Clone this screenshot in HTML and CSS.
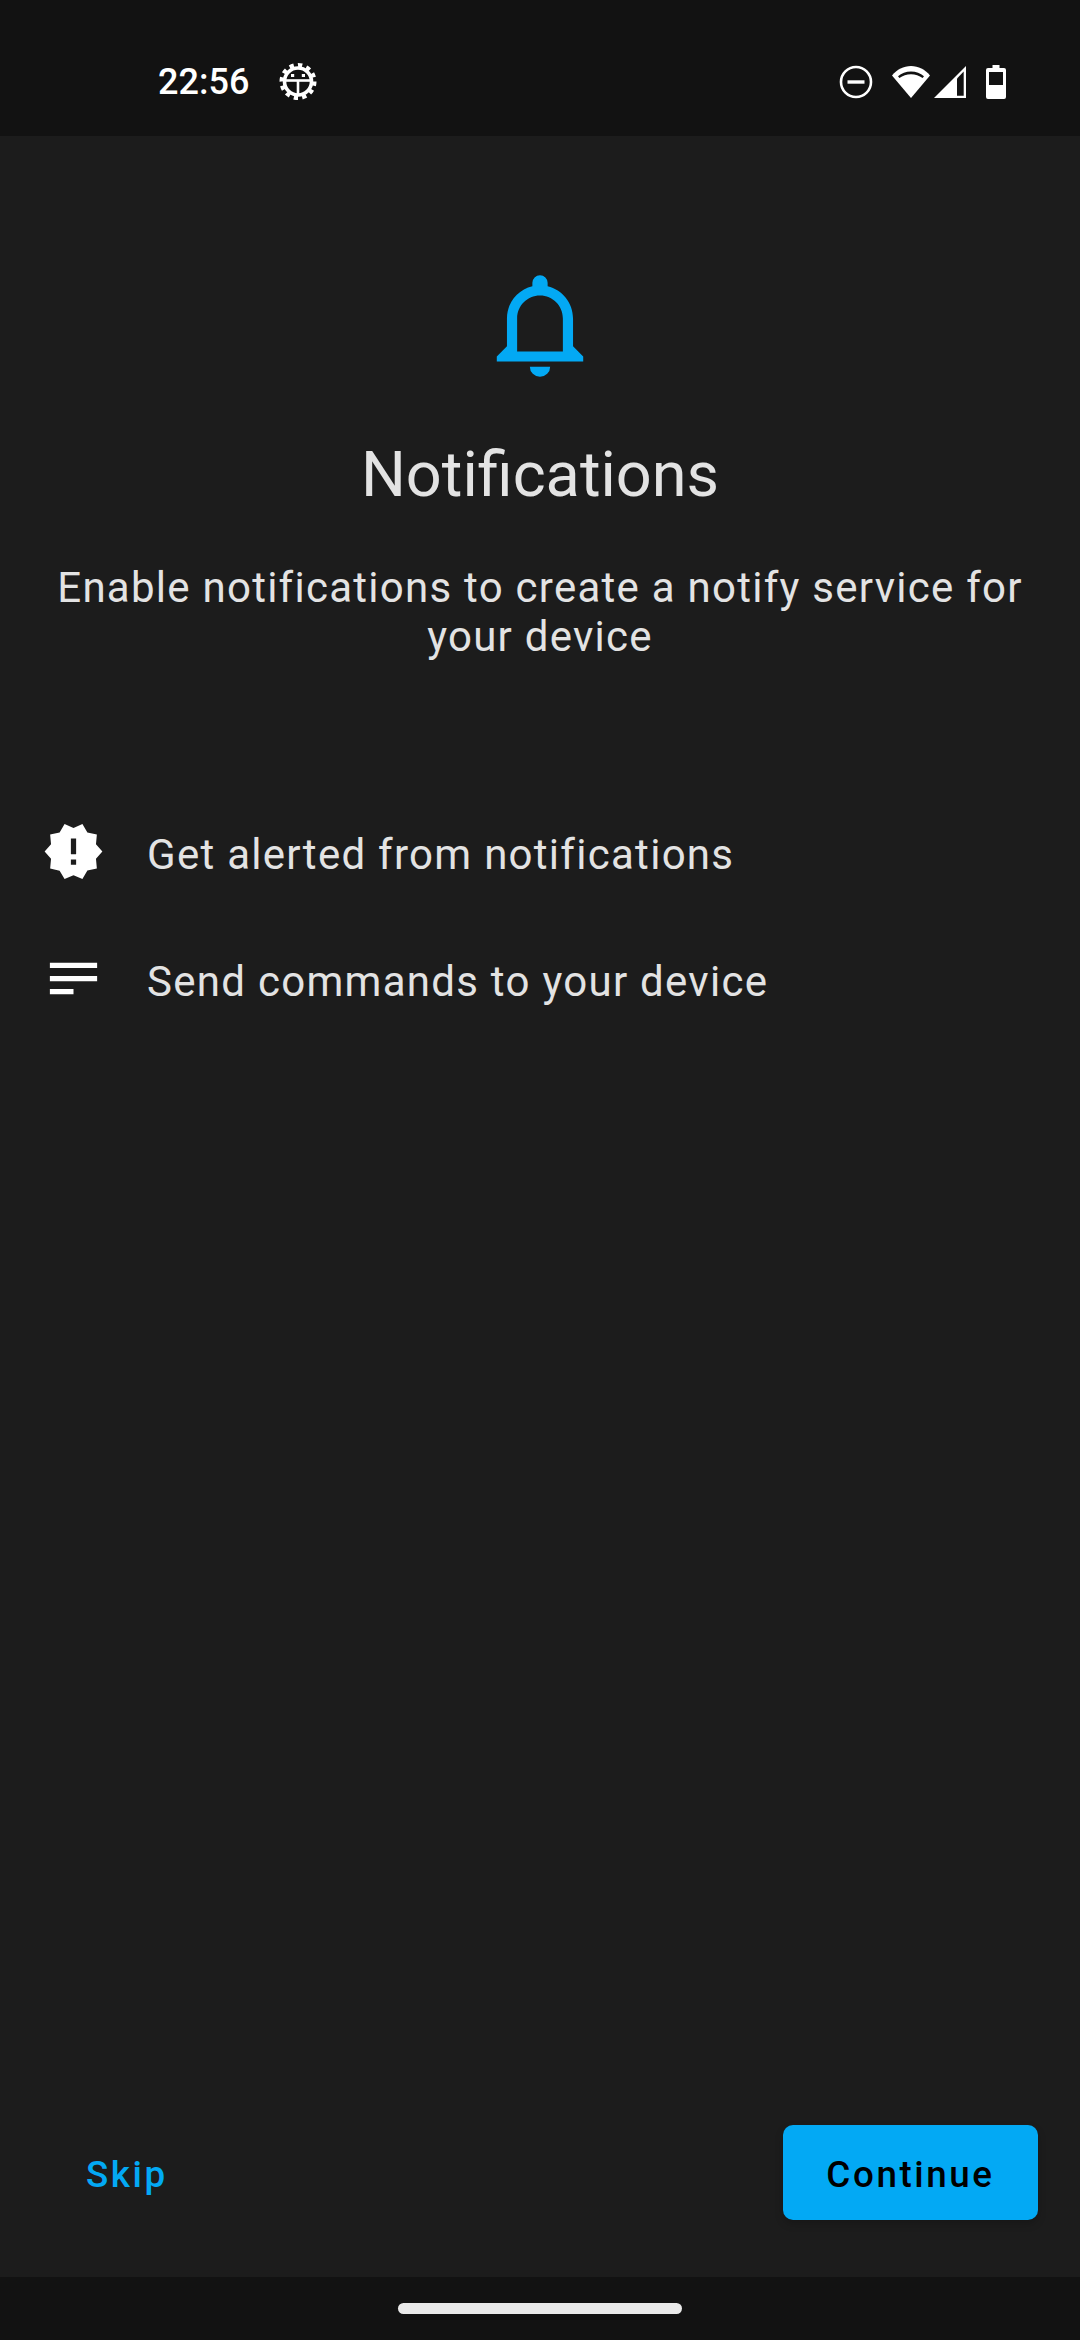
FILE: index.html
```html
<!DOCTYPE html>
<html lang="en">
<head>
    <meta charset="UTF-8">
    <meta name="viewport" content="width=device-width, initial-scale=1.0">
    <title>Notifications</title>
    <link rel="stylesheet" href="styles.css">
</head>
<body>
    <div class="status-bar">
        <div class="status-left">
            <span class="clock">22:56</span>
            <svg class="gear" viewBox="0 0 38 38">
                <circle cx="19" cy="18.500" r="13.500" fill="none" stroke="#fff" stroke-width="3.600"/>
                <circle cx="19" cy="18.500" r="16.500" fill="none" stroke="#fff" stroke-width="4" stroke-dasharray="1 1" pathLength="24"/>
                <path d="M6 17.500h26" stroke="#fff" stroke-width="2.600"/>
                <path d="M19 17.500v14" stroke="#fff" stroke-width="2.600"/>
                <rect x="12" y="11" width="3.200" height="3" fill="#fff"/>
                <rect x="22.800" y="11" width="3.200" height="3" fill="#fff"/>
            </svg>
        </div>
        <div class="status-right">
            <svg class="ic-dnd" viewBox="0 0 34 34">
                <circle cx="17" cy="17" r="15" fill="none" stroke="#fff" stroke-width="2.600"/>
                <rect x="8.500" y="15.300" width="17" height="3.400" fill="#fff"/>
            </svg>
            <svg class="ic-wifi" viewBox="0 0 38 34">
                <path d="M19 33L0 10.500C5 4.500 11.500 1 19 1s14 3.500 19 9.500z" fill="#fff"/>
                <path d="M6 11.300C9.500 8.300 14 6.500 19 6.500s9.500 1.800 13 4.800l-1.400 1.700C27.300 10.500 23.300 9.200 19 9.200s-8.300 1.300-11.600 3.800z" fill="#121212"/>
            </svg>
            <svg class="ic-signal" viewBox="0 0 32 32">
                <path d="M32 0v32H0z" fill="#fff"/>
                <path d="M23 12.500L29.700 5.500V29.700H23z" fill="#121212"/>
            </svg>
            <svg class="ic-battery" viewBox="0 0 20 34">
                <path d="M6.500 0h7v3H18q2 0 2 2v27q0 2-2 2H2q-2 0-2-2V5q0-2 2-2h4.500z" fill="#fff"/>
                <rect x="3" y="7" width="14" height="13" fill="#121212"/>
            </svg>
        </div>
    </div>

    <div class="main">
        <div class="intro">
            <svg class="bell" viewBox="-0.500 0 24 24">
                <path d="M16,17H7V10.500C7,8 9,6 11.500,6C14,6 16,8 16,10.500M18,16V10.500C18,7.430 15.860,4.860 13,4.180V3.500A1.500,1.500 0 0,0 11.500,2A1.500,1.500 0 0,0 10,3.500V4.180C7.130,4.860 5,7.430 5,10.500V16L3,18V19H20V18M11.500,22A2,2 0 0,0 13.500,20H9.500A2,2 0 0,0 11.500,22Z"/>
            </svg>
            <h1>Notifications</h1>
            <p class="lead">Enable notifications to create a notify service for your device</p>
        </div>

        <div class="features">
            <div class="feature">
                <svg class="feature-icon" viewBox="0 0 24 24">
                    <path d="M23,12L20.560,9.220L20.900,5.540L17.290,4.720L15.400,1.540L12,3L8.600,1.540L6.710,4.720L3.100,5.530L3.440,9.210L1,12L3.440,14.780L3.100,18.470L6.710,19.290L8.600,22.470L12,21L15.400,22.460L17.290,19.280L20.900,18.460L20.560,14.780L23,12M13,17H11V15H13V17M13,13H11V7H13V13Z"/>
                </svg>
                <span class="feature-text">Get alerted from notifications</span>
            </div>
            <div class="feature">
                <svg class="feature-icon" viewBox="0 0 24 24">
                    <path d="M21,6V8H3V6H21M3,18H12V16H3V18M3,13H21V11H3V13Z"/>
                </svg>
                <span class="feature-text">Send commands to your device</span>
            </div>
        </div>

        <div class="actions">
            <button class="btn-skip">Skip</button>
            <button class="btn-continue">Continue</button>
        </div>
    </div>

    <div class="nav-bar">
        <div class="home-pill"></div>
    </div>
</body>
</html>
```

FILE: styles.css
```css
:root {
    --bg-color: #1c1c1c;
    --bar-color: #121212;
    --text-color: #e3e3e3;
    --accent: #03a9f4;
}
* {
    box-sizing: border-box;
}
html, body {
    height: 100%;
}
body {
    margin: 0;
    display: flex;
    flex-direction: column;
    font-family: Roboto, sans-serif;
    background: var(--bg-color);
    color: var(--text-color);
}
.status-bar {
    height: 136px;
    flex-shrink: 0;
    display: flex;
    justify-content: space-between;
    align-items: center;
    padding: 28px 74px 0 158px;
    background: var(--bar-color);
    color: #fff;
}
.status-left, .status-right {
    display: flex;
    align-items: center;
}
.clock {
    font-size: 36px;
    font-weight: 500;
    line-height: 40px;
}
.gear {
    width: 38px;
    height: 38px;
    margin-left: 30px;
}
.ic-dnd {
    width: 34px;
    height: 34px;
}
.ic-wifi {
    width: 38px;
    height: 34px;
    margin-left: 19px;
}
.ic-signal {
    width: 32px;
    height: 32px;
    margin-left: 4px;
}
.ic-battery {
    width: 20px;
    height: 34px;
    margin-left: 20px;
}
.main {
    flex: 1;
    display: flex;
    flex-direction: column;
    min-height: 0;
}
.intro {
    padding: 129px 42px 0;
    text-align: center;
}
.bell {
    display: block;
    width: 122px;
    height: 122px;
    margin: 0 auto;
    fill: var(--accent);
}
h1 {
    margin: 51px 0 0;
    font-size: 63px;
    font-weight: 400;
    line-height: 74px;
    color: var(--text-color);
}
.lead {
    margin: 51px 0 0;
    font-size: 42px;
    line-height: 49px;
    letter-spacing: 1.260px;
}
.features {
    margin-top: 127px;
    padding: 0 42px;
}
.feature {
    display: flex;
    align-items: center;
    gap: 42px;
    height: 127px;
    font-size: 42px;
    letter-spacing: 1.280px;
}
.feature-icon {
    width: 63px;
    height: 63px;
    flex-shrink: 0;
    fill: #fff;
}
.feature-text {
    padding-top: 5px;
}
.actions {
    margin-top: auto;
    padding: 0 42px 57px;
    display: flex;
    justify-content: space-between;
    align-items: center;
}
button {
    border: none;
    font-family: inherit;
    font-size: 36.750px;
    font-weight: 500;
    letter-spacing: 2.600px;
}
.btn-skip {
    padding: 3px 44px 0;
    background: none;
    color: var(--accent);
}
.btn-continue {
    width: 255px;
    height: 95px;
    padding: 3px 0 0;
    border-radius: 10px;
    background: var(--accent);
    color: #000;
    box-shadow: 0 4px 8px rgba(0, 0, 0, 0.2);
}
.nav-bar {
    height: 63px;
    flex-shrink: 0;
    display: flex;
    justify-content: center;
    align-items: flex-end;
    padding-bottom: 26px;
    background: var(--bar-color);
}
.home-pill {
    width: 284px;
    height: 11px;
    border-radius: 6px;
    background: #eaeaea;
}
```
